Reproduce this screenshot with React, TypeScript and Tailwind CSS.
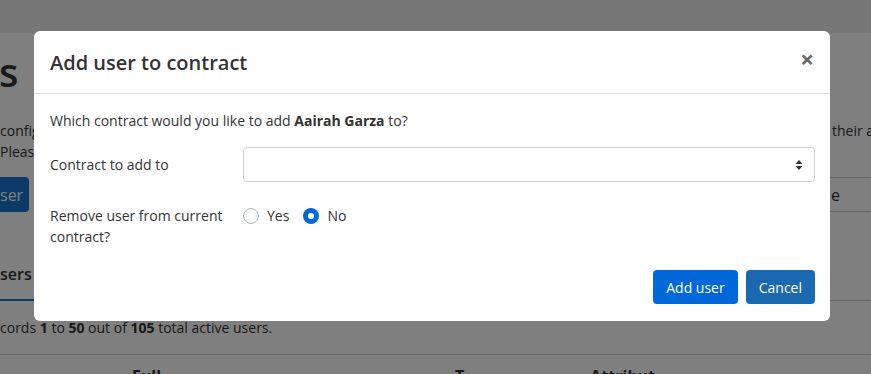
import { useState } from 'react';

function SelectArrows() {
  return (
    <svg width="8" height="12" viewBox="0 0 8 12" className="fill-[#333]">
      <path d="M4 1 L7.5 5 L0.5 5 Z" />
      <path d="M4 11 L7.5 7 L0.5 7 Z" />
    </svg>
  );
}

function Radio({ checked, label, onClick }: { checked: boolean; label: string; onClick: () => void }) {
  return (
    <label className="flex items-center gap-2 cursor-pointer" onClick={onClick}>
      {checked ? (
        <span className="flex h-4 w-4 items-center justify-center rounded-full bg-[#0068d9]">
          <span className="h-[6px] w-[6px] rounded-full bg-white" />
        </span>
      ) : (
        <span className="h-4 w-4 rounded-full border border-[#adb5bd] bg-white" />
      )}
      <span>{label}</span>
    </label>
  );
}

export default function App() {
  const [remove, setRemove] = useState(false);

  return (
    <div className="relative h-[374px] w-[871px] overflow-hidden bg-white font-['Open_Sans',sans-serif] text-[14px] text-[#333]">
      {/* Page behind the modal */}
      <div className="h-[33px] bg-[#eeeeee]" />
      <div className="flex h-[73px] items-end">
        <span className="text-[40px] font-semibold leading-none text-[#333] -ml-[1px] mb-[14px]">s</span>
      </div>
      <div className="flex h-[21px] items-center justify-between leading-[21px] mt-[14px]">
        <span>config</span>
        <span className="w-[39px] shrink-0 whitespace-nowrap">their a</span>
      </div>
      <div className="flex h-[21px] items-center leading-[21px]">
        <span>Please</span>
      </div>
      <div className="mt-[15px] flex h-[35px] items-stretch justify-between">
        <div className="flex items-center rounded-r-[4px] bg-[#1674cc] pr-[6px] text-[16px] text-white">ser</div>
        <div className="flex w-[41px] items-center border-y border-[#ccc] pl-[1px] text-[16px]">e</div>
      </div>
      <div className="mt-[48px] flex h-[41px] flex-col justify-between border-b border-[#ccc]">
        <span className="text-[16px] font-semibold leading-[24px] pt-[2px]">sers</span>
        <span className="h-[2px] w-[34px] bg-[#1674cc] -mb-[1px]" />
      </div>
      <div className="flex h-[54px] items-start border-b border-[#ccc] pt-[16px] leading-[21px]">
        <span>
          cords <b>1</b> to <b>50</b> out of <b>105</b> total active users.
        </span>
      </div>
      <div className="flex h-[20px] text-[16px] font-bold leading-[24px]">
        <span className="ml-[132px] mt-[9px]">Full</span>
        <span className="ml-[294px] mt-[9px]">T</span>
        <span className="ml-[126px] mt-[9px]">Attribut</span>
      </div>

      {/* Overlay */}
      <div className="absolute inset-0 bg-black/50" />

      {/* Modal */}
      <div className="absolute left-[34px] top-[31px] w-[796px] rounded-[6px] bg-white">
        <div className="flex h-[63px] items-center justify-between border-b border-[#dee2e6] pl-4 pr-[15px]">
          <h2 className="pt-[2px] text-[20px] font-semibold text-[#333]">Add user to contract</h2>
          <button className="mr-[1px] -mt-[6px] text-[24px] font-bold leading-none text-[#666]">×</button>
        </div>
        <div className="pl-4 pr-[15px] pt-[16px]">
          <p className="leading-[21px]">
            Which contract would you like to add <b>Aairah Garza</b> to?
          </p>
          <div className="mt-[16px] flex items-center">
            <label className="w-[193px] leading-[21px]">Contract to add to</label>
            <div className="flex h-[35px] flex-1 items-center justify-end rounded-[4px] border border-[#ced4da] pr-[11px]">
              <SelectArrows />
            </div>
          </div>
          <div className="mt-[16px] flex items-start pt-[7px]">
            <label className="w-[193px] pr-4 leading-[21px]">Remove user from current contract?</label>
            <div className="flex items-center gap-[14px] pt-[1px] leading-[19px]">
              <Radio checked={remove} label="Yes" onClick={() => setRemove(true)} />
              <Radio checked={!remove} label="No" onClick={() => setRemove(false)} />
            </div>
          </div>
        </div>
        <div className="flex justify-end gap-2 pl-4 pr-[15px] pt-[23px] pb-[17px]">
          <button className="h-[34px] rounded-[4px] bg-[#0068d9] px-[13px] text-white">Add user</button>
          <button className="h-[34px] rounded-[4px] bg-[#1a69b0] px-[13px] text-white">Cancel</button>
        </div>
      </div>
    </div>
  );
}
